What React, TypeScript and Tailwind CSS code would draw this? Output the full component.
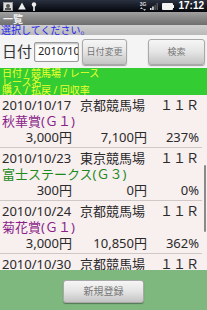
const JP = { fontFamily: '"Noto Sans", "Noto Sans CJK JP", sans-serif' }

const RACES = [
  { date: '2010/10/17', place: '京都競馬場', race: '１１Ｒ', name: '秋華賞(Ｇ１)', grade: 1, buy: '3,000円', back: '7,100円', rate: '237%' },
  { date: '2010/10/23', place: '東京競馬場', race: '１１Ｒ', name: '富士ステークス(Ｇ３)', grade: 3, buy: '300円', back: '0円', rate: '0%' },
  { date: '2010/10/24', place: '京都競馬場', race: '１１Ｒ', name: '菊花賞(Ｇ１)', grade: 1, buy: '3,000円', back: '10,850円', rate: '362%' },
  { date: '2010/10/30', place: '京都競馬場', race: '１１Ｒ', name: '天皇賞(秋)(Ｇ１)', grade: 1, buy: '3,000円', back: '0円', rate: '0%' },
]

function StatusBar() {
  return (
    <div className="flex h-[12px] items-center bg-gradient-to-b from-[#2a3140] to-[#05070c] px-[3px]">
      <div className="flex items-center gap-[5px]">
        <svg width="10" height="9" viewBox="0 0 10 9">
          <rect x="0.5" y="0.5" width="9" height="8" fill="#ddd" stroke="#999" />
          <circle cx="5" cy="4" r="2" fill="#555" />
          <rect x="2" y="6" width="6" height="2" fill="#555" />
        </svg>
        <svg width="8" height="8" viewBox="0 0 8 8">
          <polygon points="4,0.5 7.8,7.5 0.2,7.5" fill="#eee" />
        </svg>
        <svg width="6" height="9" viewBox="0 0 6 9">
          <circle cx="3" cy="2.5" r="2.2" fill="#eee" />
          <rect x="2.2" y="4" width="1.6" height="5" fill="#eee" />
        </svg>
      </div>
      <div className="ml-auto flex items-center gap-[4px]">
        <div className="flex flex-col items-center">
          <span className="text-[5px] font-bold leading-[5px] text-[#ddd]" style={{ fontFamily: '"Liberation Sans", sans-serif' }}>3G</span>
          <svg width="6" height="4" viewBox="0 0 6 4">
            <polygon points="1.5,0 3,2 0,2" fill="#bbb" />
            <polygon points="4.5,4 3,2 6,2" fill="#bbb" />
          </svg>
        </div>
        <svg width="8" height="7" viewBox="0 0 8 7">
          <rect x="0" y="5" width="1.5" height="2" fill="#eee" />
          <rect x="2.2" y="3.5" width="1.5" height="3.5" fill="#eee" />
          <rect x="4.4" y="2" width="1.5" height="5" fill="#555" />
          <rect x="6.5" y="0" width="1.5" height="7" fill="#555" />
        </svg>
        <svg width="12" height="7" viewBox="0 0 12 7">
          <rect x="0" y="0" width="11" height="7" rx="1" fill="#f2f2f2" />
          <rect x="11" y="2" width="1" height="3" fill="#f2f2f2" />
        </svg>
        <span className="text-[10px] font-bold leading-none text-white" style={{ fontFamily: '"Liberation Sans", sans-serif' }}>
          17:12
        </span>
      </div>
    </div>
  )
}

function Btn({ label, className }: { label: string; className: string }) {
  return (
    <div
      className={`flex items-center justify-center rounded-[3px] border border-[#a8a8a8] bg-gradient-to-b from-[#f6f6f6] via-[#e4e4e4] to-[#c4c4c4] shadow-[0_1px_1px_rgba(0,0,0,0.35)] text-[#777] ${className}`}
      style={JP}
    >
      {label}
    </div>
  )
}

export default function App() {
  return (
    <div className="flex h-[310px] w-[207px] flex-col overflow-hidden bg-[#f3f3f3]" style={JP}>
      <StatusBar />

      <div className="flex h-[13px] items-center bg-gradient-to-b from-[#a0a0a0] to-[#6e6e6e] px-[3px] text-[10px] font-bold leading-none text-[#f0f0f0]">
        一覧
      </div>

      <div className="flex h-[10px] items-center bg-gradient-to-b from-[#cfcfcf] to-[#b8b8b8] px-[1px] text-[10px] leading-none text-[#2525ee]">
        選択してください。
      </div>

      <div className="flex h-[33px] items-center bg-[#f4f4f4] pl-[2px] pr-[2px]">
        <span className="w-[32px] text-[15px] leading-none text-[#333]">日付</span>
        <div className="flex h-[20px] w-[45px] items-center overflow-hidden rounded-[2px] border border-[#9a9a9a] bg-white pl-[3px] text-[11px] text-[#222] shadow-[inset_0_1px_2px_rgba(0,0,0,0.3)]">
          2010/10
        </div>
        <Btn label="日付変更" className="ml-[3px] h-[26px] w-[45px] text-[9px]" />
        <Btn label="検索" className="ml-auto h-[26px] w-[57px] text-[9px]" />
      </div>

      <div className="h-[27px] bg-[#33cc33] pl-[2px] pt-[1px] text-[10px] leading-[8.6px] text-[#f0ff30]">
        <div>日付 / 競馬場 / レース</div>
        <div>レース名</div>
        <div>購入 / 払戻 / 回収率</div>
      </div>

      <div className="relative h-[175px] overflow-hidden bg-[#f8efef]">
        {RACES.map((r) => (
          <div key={r.date} className="mr-[5px] border-b border-[#cfc8c8] py-[2px] pl-[2px] pr-[3px] text-[13px] leading-[16px] text-[#2a2a2a]">
            <div className="flex">
              <span className="w-[78px]">{r.date}</span>
              <span>{r.place}</span>
              <span className="ml-auto">{r.race}</span>
            </div>
            <div className={r.grade === 1 ? 'text-[#8a1f8a]' : 'text-[#1e8a1e]'}>{r.name}</div>
            <div className="flex">
              <span className="w-[70px] text-right">{r.buy}</span>
              <span className="w-[75px] text-right">{r.back}</span>
              <span className="flex-1 text-right">{r.rate}</span>
            </div>
          </div>
        ))}
        <div className="absolute right-[1px] top-[70px] h-[67px] w-[2px] rounded-full bg-[#8a8a8a]" />
      </div>

      <div className="flex flex-1 items-start justify-center bg-[#7fb87f] pt-[10px]">
        <Btn label="新規登録" className="h-[23px] w-[81px] text-[10px]" />
      </div>
    </div>
  )
}
